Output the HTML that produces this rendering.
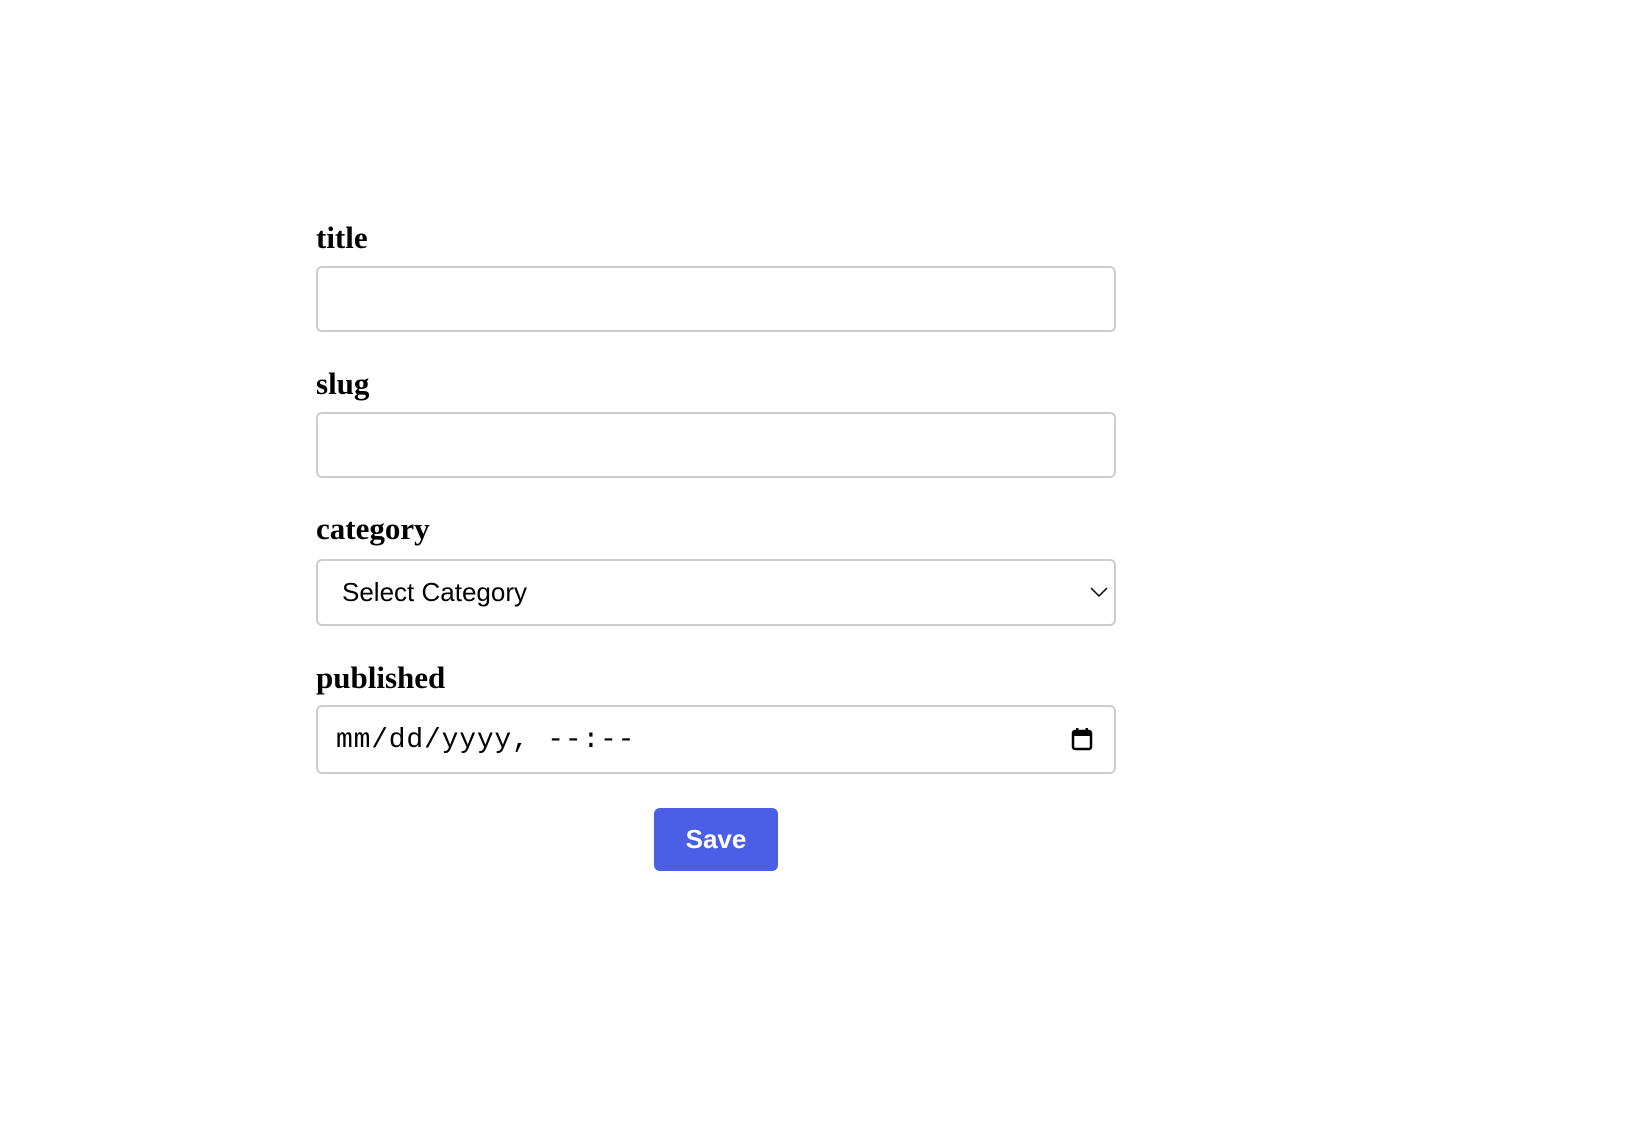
<!DOCTYPE html>
<html><head><style>
body{margin:0;background:#fff;width:1630px;height:1126px;position:relative;font-family:"Liberation Serif",serif;}
.l{position:absolute;left:316px;font-weight:bold;font-size:31px;line-height:36px;color:#000;}
.b{position:absolute;left:316px;border:2px solid #ccc;border-radius:6px;box-sizing:border-box;width:800px;}
.t{position:absolute;font-family:"Liberation Sans",sans-serif;font-size:25px;color:#000;}
</style></head><body>
<div class="l" style="top:220px">title</div>
<div class="b" style="top:266px;height:66px"></div>
<div class="l" style="top:366px">slug</div>
<div class="b" style="top:412px;height:66px"></div>
<div class="l" style="top:511px">category</div>
<div class="b" style="top:559px;height:67px"></div>
<div class="t" style="left:342px;top:577px;font-size:26px">Select Category</div>
<svg style="position:absolute;left:1090px;top:586px" width="18" height="12" viewBox="0 0 18 12"><path d="M1 2l8 8 8-8" fill="none" stroke="#000" stroke-width="1.5"/></svg>
<div class="l" style="top:660px">published</div>
<div class="b" style="top:705px;height:69px"></div>
<div class="t" style="left:336px;top:725px;font-family:'Liberation Mono',monospace;font-size:28px;letter-spacing:0.8px">mm/dd/yyyy, --:--</div>
<svg style="position:absolute;left:1071px;top:727px" width="22" height="24" viewBox="0 0 22 24"><rect x="2" y="4" width="18" height="18" rx="2" fill="none" stroke="#000" stroke-width="2.5"/><rect x="2" y="4" width="18" height="5" fill="#000"/><rect x="5" y="1" width="2.5" height="5" fill="#000"/><rect x="14.5" y="1" width="2.5" height="5" fill="#000"/></svg>
<div style="position:absolute;left:654px;top:808px;width:124px;height:63px;background:#4a5fe6;border-radius:6px;color:#fff;font-family:'Liberation Sans',sans-serif;font-size:26px;font-weight:bold;line-height:63px;text-align:center">Save</div>
</body></html>
